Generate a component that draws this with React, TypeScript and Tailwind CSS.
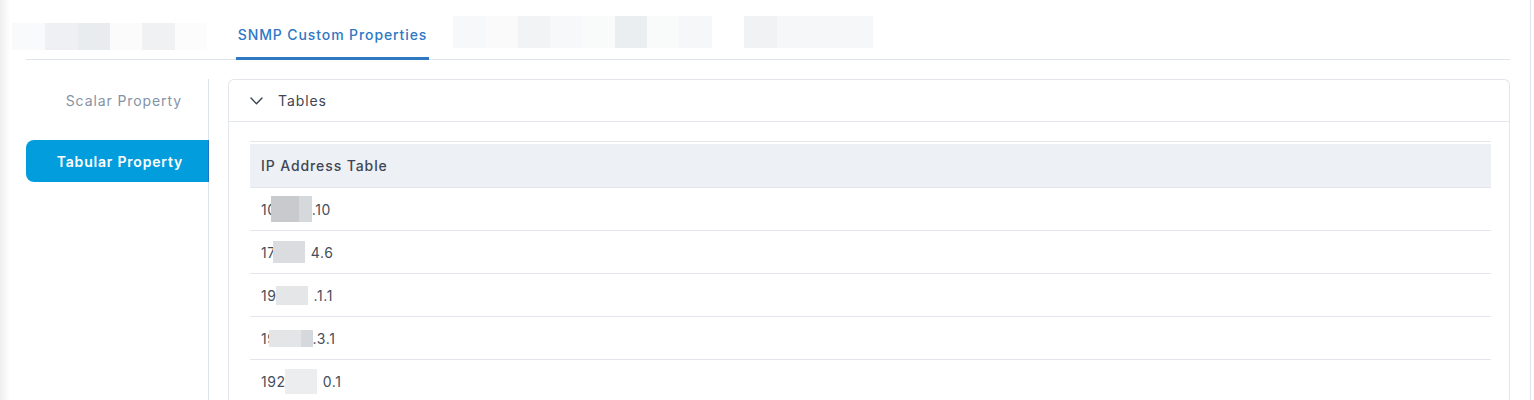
const leftBlocks = [
  { w: 'w-[33px]', c: 'bg-[#f9fafb]' },
  { w: 'w-[33px]', c: 'bg-[#eef0f3]' },
  { w: 'w-[32px]', c: 'bg-[#e9ecef]' },
  { w: 'w-[32px]', c: 'bg-[#fbfbfb]' },
  { w: 'w-[33px]', c: 'bg-[#f0f1f3]' },
  { w: 'w-[32px]', c: 'bg-[#fcfcfc]' },
];

const midBlocks = [
  { w: 'w-[32px]', c: 'bg-[#f7f8f9]' },
  { w: 'w-[33px]', c: 'bg-[#fafafa]' },
  { w: 'w-[32px]', c: 'bg-[#f2f3f5]' },
  { w: 'w-[32px]', c: 'bg-[#f7f8fa]' },
  { w: 'w-[33px]', c: 'bg-[#f9fafa]' },
  { w: 'w-[32px]', c: 'bg-[#eaeef1]' },
  { w: 'w-[32px]', c: 'bg-[#f9fafa]' },
  { w: 'w-[33px]', c: 'bg-[#f6f7f9]' },
];

const rows = [
  { a: '10', b: '.10', blocks: [{ w: 'w-[28px]', c: 'bg-[#c8cace]', h: 'h-[26px]' }, { w: 'w-[13px]', c: 'bg-[#d6d9dc]', h: 'h-[26px]' }], ml: '-ml-[6px]' },
  { a: '17', b: '4.6', blocks: [{ w: 'w-[32px]', c: 'bg-[#dadcdf]', h: 'h-[22px]' }, { w: 'w-[6px]', c: 'bg-white', h: 'h-[22px]' }], ml: '-ml-[3px]' },
  { a: '19', b: '.1.1', blocks: [{ w: 'w-[32px]', c: 'bg-[#e5e6e8]', h: 'h-[19px]' }, { w: 'w-[6px]', c: 'bg-white', h: 'h-[19px]' }], ml: '-ml-[1px]' },
  { a: '19', b: '.3.1', blocks: [{ w: 'w-[32px]', c: 'bg-[#e4e5e7]', h: 'h-[17px]' }, { w: 'w-[12px]', c: 'bg-[#d5d8dc]', h: 'h-[17px]' }], ml: '-ml-[8px]' },
  { a: '192', b: '0.1', blocks: [{ w: 'w-[32px]', c: 'bg-[#ecedee]', h: 'h-[25px]' }, { w: 'w-[6px]', c: 'bg-white', h: 'h-[25px]' }], ml: '-ml-[1px]' },
];

export default function App() {
  return (
    <div className="flex h-[400px] w-[1534px] overflow-hidden bg-white font-['Inter',sans-serif] text-[14px]">
      <div className="w-[10px] shrink-0 bg-gradient-to-r from-[#eeeeee] to-white" />
      <div className="flex w-[1521px] flex-col border-r border-[#e0e4ea]">
        {/* tab strip */}
        <div className="ml-[16px] mr-[20px] h-[60px] border-b border-[#dfe3ea]">
          <div className="-ml-[14px] flex h-full">
            <div className="mt-[23px] flex h-[27px]">
              {leftBlocks.map((b, i) => (
                <div key={i} className={`${b.w} ${b.c} h-full`} />
              ))}
            </div>
            <div className="ml-[29px] -mb-px flex h-[60px] w-[193px] justify-center border-b-[3px] border-[#2f78c4] pt-[25px]">
              <span className="leading-[20px] font-medium tracking-[0.9px] text-[#2f78c4]">SNMP Custom Properties</span>
            </div>
            <div className="ml-[24px] mt-[16px] flex h-[32px]">
              {midBlocks.map((b, i) => (
                <div key={i} className={`${b.w} ${b.c} h-full`} />
              ))}
            </div>
            <div className="ml-[32px] mt-[16px] flex h-[32px]">
              <div className="h-full w-[33px] bg-[#f1f2f4]" />
              <div className="h-full w-[96px] bg-[#f6f7f9]" />
            </div>
          </div>
        </div>

        {/* body */}
        <div className="mt-[19px] flex flex-1">
          <div className="ml-[16px] flex w-[183px] shrink-0 flex-col border-r border-[#dde3ea]">
            <div className="flex h-[42px] items-center justify-end pr-[26px] tracking-[0.9px] text-[#8593a6]">
              Scalar Property
            </div>
            <div className="-mr-px mt-[19px] flex h-[42px] items-center justify-end rounded-l-lg border-r border-[#1b72c8] bg-[#019ddd] pr-[25px] font-semibold tracking-[0.8px] text-white">
              Tabular Property
            </div>
          </div>

          <div className="ml-[19px] w-[1282px] rounded-t-md border border-b-0 border-[#e3e6eb]">
            <div className="flex h-[42px] items-center gap-[15px] border-b border-[#e3e6eb] pl-[21px] text-[#3e4655]">
              <svg width="13" height="8" viewBox="0 0 13 8" fill="none" stroke="#3e4655" strokeWidth="1.4" strokeLinecap="round" strokeLinejoin="round">
                <polyline points="1,1 6.5,6.8 12,1" />
              </svg>
              <span className="tracking-[0.9px]">Tables</span>
            </div>
            <div className="pl-[21px] pr-[18px] pt-[19px]">
              <div className="border-t border-[#e5e7eb] pt-[2px]">
                <div className="flex h-[44px] items-center border-b border-[#e2e5ea] bg-[#edf0f4] pl-[11px] font-medium tracking-[0.9px] text-[#3e4655]">
                  IP Address Table
                </div>
                {rows.map((r, i) => (
                  <div key={i} className="flex h-[43px] items-center border-b border-[#e3e6ec] pl-[11px] tracking-[0.6px] text-[#464e5c]">
                    <span>{r.a}</span>
                    <div className={`flex ${r.ml}`}>
                      {r.blocks.map((b, j) => (
                        <div key={j} className={`${b.w} ${b.h} ${b.c}`} />
                      ))}
                    </div>
                    <span>{r.b}</span>
                  </div>
                ))}
              </div>
            </div>
          </div>
        </div>
      </div>
    </div>
  );
}
